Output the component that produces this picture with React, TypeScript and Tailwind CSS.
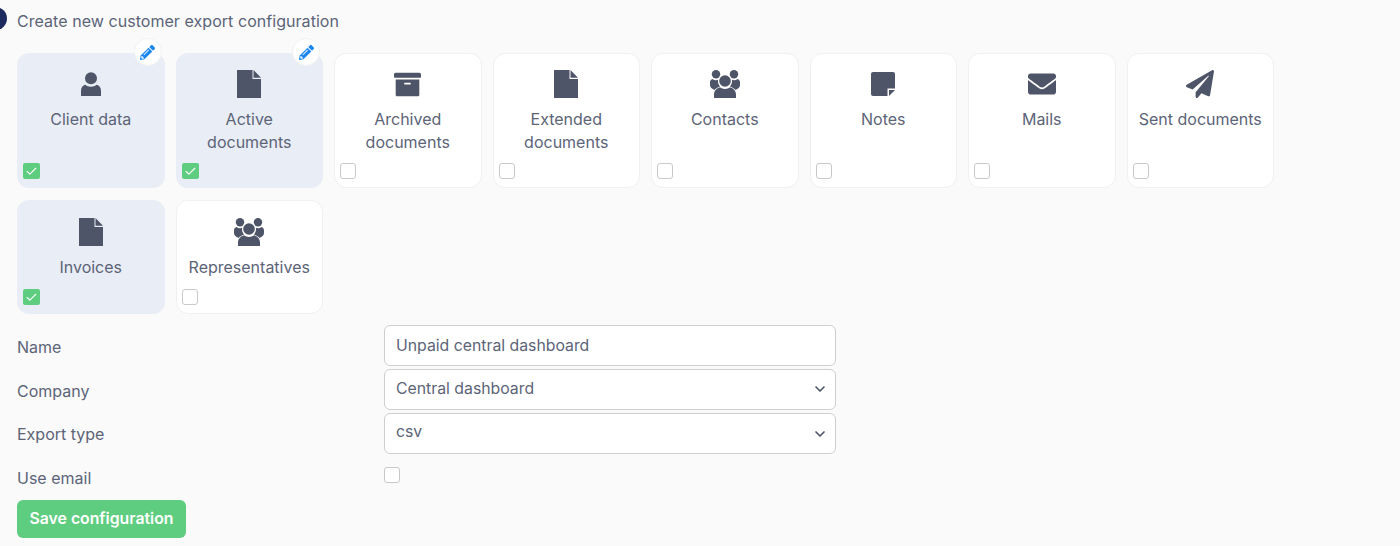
import { FaArchive, FaEnvelope, FaPaperPlane, FaPencilAlt } from "react-icons/fa";
import { Check, ChevronDown } from "lucide-react";
import type { ReactNode } from "react";

function UserIcon() {
  return (
    <svg viewBox="0 0 20 24" className="h-6 w-5 fill-[#4e5568]">
      <circle cx="10" cy="6.300" r="6" />
      <path d="M0 24v-5c0-3.500 1.800-5.500 4.200-6.200C5.700 14.100 7.700 14.800 10 14.800s4.300-.7 5.800-2c2.400.7 4.200 2.700 4.200 6.200v5H0z" />
    </svg>
  );
}

function FileIcon() {
  return (
    <svg viewBox="0 0 24 28" className="h-7 w-6 fill-[#4e5568]">
      <path d="M0 0h15.500v9H24v19H0z" />
      <path d="M16.500 0L24 7.800h-7.500z" />
    </svg>
  );
}

function NoteIcon() {
  return (
    <svg viewBox="0 0 24 24" className="h-6 w-6 fill-[#4e5568]">
      <path d="M2 0h20a2 2 0 012 2v14.500h-7.500V24H2a2 2 0 01-2-2V2a2 2 0 012-2z" />
      <path d="M18 18h6l-6 6z" />
    </svg>
  );
}

function GroupIcon() {
  return (
    <svg viewBox="0 0 30 28" className="h-7 w-[30px] fill-[#4e5568]">
      <circle cx="6" cy="4.200" r="4.200" />
      <circle cx="24" cy="4.200" r="4.200" />
      <path d="M0 15v-2.500C0 10.500 1.200 9.300 2.500 9c1 .8 2.200 1.200 3.500 1.200.8 0 1.400-.1 2-.4-.3 2.700.5 5 2 6.700-2.700 1-4.500 2.300-5.500 3.500C2 18.500 0 17.500 0 15z" />
      <path d="M30 15v-2.500c0-2-1.200-3.200-2.500-3.500-1 .8-2.200 1.200-3.500 1.200-.8 0-1.400-.1-2-.4.3 2.700-.5 5-2 6.700 2.700 1 4.500 2.300 5.500 3.500C28 18.500 30 17.500 30 15z" />
      <circle cx="15" cy="11" r="5.800" />
      <path d="M4 28v-3.500c0-3.500 2.600-6.300 6-7.200 1.400 1.100 3.100 1.700 5 1.700s3.600-.6 5-1.700c3.400.9 6 3.700 6 7.200V28H4z" />
    </svg>
  );
}

const row1 = [
  { title: "Client data", icon: <UserIcon />, on: true, edit: true },
  { title: "Active documents", icon: <FileIcon />, on: true, edit: true },
  { title: "Archived documents", icon: <FaArchive className="h-[27px] w-[27px] text-[#4e5568]" /> },
  { title: "Extended documents", icon: <FileIcon /> },
  { title: "Contacts", icon: <GroupIcon /> },
  { title: "Notes", icon: <NoteIcon /> },
  { title: "Mails", icon: <FaEnvelope className="h-7 w-7 text-[#4e5568]" /> },
  { title: "Sent documents", icon: <FaPaperPlane className="h-7 w-7 text-[#4e5568]" /> },
];

const row2 = [
  { title: "Invoices", icon: <FileIcon />, on: true },
  { title: "Representatives", icon: <GroupIcon /> },
];

type CardProps = { title: string; icon: ReactNode; on?: boolean; edit?: boolean; lower?: boolean };

function Box({ on }: { on?: boolean }) {
  if (on) {
    return (
      <span className="flex h-[16px] w-[17px] items-center justify-center rounded-[2px] bg-[#5fcd80]">
        <Check className="h-[13px] w-[13px] text-white" strokeWidth={2} />
      </span>
    );
  }
  return <span className="block h-[16px] w-[16px] rounded-[3px] border border-[#c9c9c9] bg-white" />;
}

function Card({ title, icon, on, edit, lower }: CardProps) {
  return (
    <div
      className={
        "relative flex w-[147.5px] flex-col items-center rounded-xl border " +
        (lower ? "pt-[17px] " : "pt-[16px] ") +
        (on ? "border-transparent bg-[#e9edf5]" : "border-[#f0f0f0] bg-white")
      }
    >
      {edit && (
        <span className="absolute -top-[16px] right-[2px] flex h-[28px] w-[28px] items-center justify-center rounded-full border border-[#f2f2f2] bg-white">
          <FaPencilAlt className="h-[15px] w-[15px] text-[#1e88f0]" />
        </span>
      )}
      <div className="flex h-7 items-center justify-center">{icon}</div>
      <div className="mt-[10px] flex-1 px-2 text-center leading-[23px]">{title}</div>
      <div className="mb-[8px] ml-[5px] self-start">
        <Box on={on} />
      </div>
    </div>
  );
}

function Label({ children }: { children: ReactNode }) {
  return <div className="w-[367px] shrink-0">{children}</div>;
}

function Field({ value, select, shift, textShift }: { value: string; select?: boolean; shift: string; textShift: string }) {
  return (
    <div
      className={
        "flex h-[41px] w-[452px] items-center justify-between rounded-md border border-[#cfcfcf] bg-white pl-[11px] pr-[7px] text-[15.8px] " +
        shift
      }
    >
      <span className={textShift}>{value}</span>
      {select && <ChevronDown className="h-4 w-4 text-[#4e5568]" strokeWidth={2.5} />}
    </div>
  );
}

export default function App() {
  return (
    <div className="relative h-[546px] overflow-hidden bg-[#fafafa] pl-[17px] pt-[11px] font-['Inter',sans-serif] text-base text-[#5c6478]">
      <span className="absolute -left-[16px] top-[7px] h-[23px] w-[23px] rounded-full bg-[#1e2a5e]" />
      <div className="leading-[21px] tracking-[0.05px]">Create new customer export configuration</div>

      <div className="mt-[21px] flex h-[135px] gap-[11px]">
        {row1.map((c) => (
          <Card key={c.title} {...c} />
        ))}
      </div>
      <div className="mt-3 flex h-[114px] gap-[11px]">
        {row2.map((c) => (
          <Card key={c.title} {...c} lower />
        ))}
      </div>

      <div className="mt-[11px] flex flex-col">
        <div className="flex h-[44px] items-center">
          <Label>Name</Label>
          <Field value="Unpaid central dashboard" shift="-mt-[4px]" textShift="mt-[2px]" />
        </div>
        <div className="flex h-[44px] items-center">
          <Label>Company</Label>
          <Field value="Central dashboard" select shift="-mt-[4px]" textShift="-mt-[1px]" />
        </div>
        <div className="flex h-[43px] items-center">
          <div className="-mt-[1px]">
            <Label>Export type</Label>
          </div>
          <Field value="csv" select shift="-mt-[2px]" textShift="-mt-[3px]" />
        </div>
        <div className="flex h-[44px] items-center">
          <Label>Use email</Label>
          <div className="-mt-[6px]">
            <Box />
          </div>
        </div>
      </div>

      <button className="h-[38px] w-[169px] rounded-md bg-[#5fcd80] text-center text-[15.8px] font-semibold text-white">
        Save configuration
      </button>
    </div>
  );
}
